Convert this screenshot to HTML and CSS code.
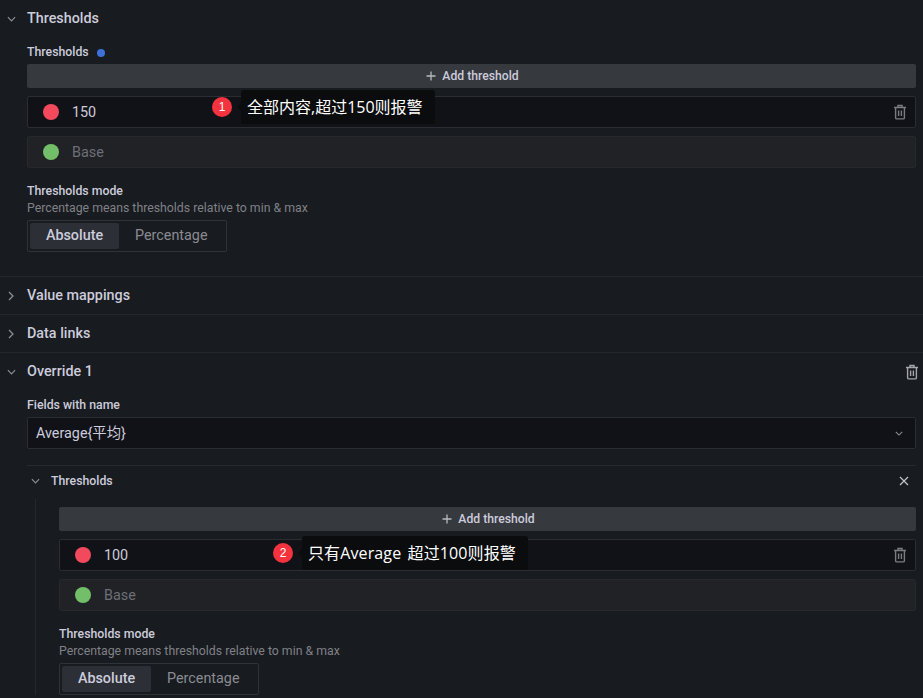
FILE: index.html
```html
<!DOCTYPE html>
<html lang="en">
<head>
<meta charset="utf-8">
<title>Thresholds</title>
<link rel="stylesheet" href="styles.css">
</head>
<body>
<svg class="defs" width="0" height="0" aria-hidden="true">
  <symbol id="trash" viewBox="0 0 14 16"><path d="M1 3.5h12M5 3.5V1.5h4v2M2.6 3.5v10.2c0 .7.5 1.2 1.2 1.2h6.4c.7 0 1.2-.5 1.2-1.2V3.5M5.6 6.5v5.5M8.4 6.5v5.5" fill="none" stroke="currentColor" stroke-width="1.4"/></symbol>
  <symbol id="down" viewBox="0 0 10 6"><path d="M1 1l4 4 4-4" fill="none" stroke="currentColor" stroke-width="1.3"/></symbol>
  <symbol id="right" viewBox="0 0 6 10"><path d="M1 1l4 4-4 4" fill="none" stroke="currentColor" stroke-width="1.3"/></symbol>
  <symbol id="plus" viewBox="0 0 10 10"><path d="M5 .5v9M.5 5h9" fill="none" stroke="currentColor" stroke-width="1.3"/></symbol>
</svg>

<main class="panel">
  <section class="section section-open-first">
    <header class="head">
      <svg class="chev-down"><use href="#down"/></svg>
      <h2 class="title">Thresholds</h2>
    </header>
    <div class="body">
      <div class="label label-dot">Thresholds <span class="dot"></span></div>
      <div class="thresholds">
        <button class="add"><svg class="plus"><use href="#plus"/></svg>Add threshold</button>
        <div class="row row-input">
          <span class="swatch red"></span><span class="val">150</span>
          <svg class="trash"><use href="#trash"/></svg>
          <span class="note note-one"><span class="badge">1</span><span class="tip">全部内容,超过150则报警</span></span>
        </div>
        <div class="row row-base"><span class="swatch green"></span><span class="val muted">Base</span></div>
      </div>
      <div class="label mode-label">Thresholds mode</div>
      <div class="desc">Percentage means thresholds relative to min &amp; max</div>
      <div class="radio"><span class="opt active">Absolute</span><span class="opt">Percentage</span></div>
    </div>
  </section>

  <section class="section closed">
    <header class="head"><svg class="chev-right"><use href="#right"/></svg><h2 class="title">Value mappings</h2></header>
  </section>
  <section class="section closed">
    <header class="head"><svg class="chev-right"><use href="#right"/></svg><h2 class="title">Data links</h2></header>
  </section>

  <section class="section">
    <header class="head">
      <svg class="chev-down"><use href="#down"/></svg>
      <h2 class="title">Override 1</h2>
      <svg class="trash trash-light"><use href="#trash"/></svg>
    </header>
    <div class="body">
      <div class="label label-fields">Fields with name</div>
      <div class="select"><span>Average{平均}</span><svg class="select-chev"><use href="#down"/></svg></div>
      <div class="sub">
        <header class="sub-head">
          <svg class="chev-down sub-chev"><use href="#down"/></svg>
          <span class="sub-title">Thresholds</span>
          <svg class="close" viewBox="0 0 10 10"><path d="M1 1l8 8M9 1l-8 8" fill="none" stroke="currentColor" stroke-width="1.2"/></svg>
        </header>
        <div class="sub-body">
          <div class="thresholds">
            <button class="add"><svg class="plus"><use href="#plus"/></svg>Add threshold</button>
            <div class="row row-input">
              <span class="swatch red"></span><span class="val">100</span>
              <svg class="trash"><use href="#trash"/></svg>
              <span class="note note-two"><span class="badge">2</span><span class="tip">只有Average 超过100则报警</span></span>
            </div>
            <div class="row row-base"><span class="swatch green"></span><span class="val muted">Base</span></div>
          </div>
          <div class="label mode-label">Thresholds mode</div>
          <div class="desc">Percentage means thresholds relative to min &amp; max</div>
          <div class="radio"><span class="opt active">Absolute</span><span class="opt">Percentage</span></div>
        </div>
      </div>
    </div>
  </section>
</main>
</body>
</html>
```
FILE: styles.css
```css
html, body {
  margin: 0;
  height: 698px;
  overflow: hidden;
  background: #181b1f;
}
body {
  font-family: Roboto, "Noto Sans CJK SC", sans-serif;
  color: #ccccdc;
  font-size: 14.35px;
}
.defs { position: absolute; }
.panel { display: flex; flex-direction: column; }
.section { border-bottom: 1px solid #24272b; }
.section-open-first { height: 276px; }
.closed { height: 37px; }
.section:last-child { border-bottom: 0; }
.head {
  display: flex;
  align-items: center;
  height: 37px;
  padding: 0 4px 0 7px;
}
.title {
  margin: 0;
  font-size: 14.35px;
  font-weight: 500;
  line-height: 37px;
  flex: 1;
  color: #ccccdc;
}
.chev-down { width: 9px; height: 6px; margin-right: 11px; color: #8e8e96; }
.chev-right { width: 6px; height: 10px; margin: 0 13px 0 1px; color: #8e8e96; }
.body { padding: 0 7px 0 27px; }
.label {
  font-size: 12.3px;
  font-weight: 500;
  line-height: 15px;
  color: #ccccdc;
}
.label-dot { display: flex; align-items: center; gap: 8px; padding-top: 8px; margin-bottom: 4px; }
.label-fields { padding-top: 8px; }
.dot { width: 8px; height: 8px; border-radius: 50%; background: #3d71d9; }
.thresholds { display: flex; flex-direction: column; }
.add {
  display: flex;
  align-items: center;
  justify-content: center;
  gap: 6px;
  height: 24px;
  border: 0;
  padding: 0 0 0 2px;
  border-radius: 2px;
  background: #36393e;
  color: #ccccdc;
  font: 500 12.2px Roboto, sans-serif;
}
.plus { width: 10px; height: 10px; color: #b9b9c2; }
.row {
  position: relative;
  display: flex;
  align-items: center;
  box-sizing: border-box;
  border-radius: 2px;
  height: 32px;
  padding: 0 8px 0 15px;
}
.row-input { margin-top: 8px; background: #111217; border: 1px solid #2a2d31; }
.row-base { margin-top: 8px; background: #202226; border: 1px solid #25282c; }
.swatch { width: 16px; height: 16px; border-radius: 50%; margin-right: 13px; }
.red { background: #f2495c; }
.green { background: #73bf69; }
.val { font-size: 14.35px; line-height: 20px; padding-top: 2px; color: #ccccdc; }
.muted { color: #6e6f77; }
.trash { width: 14px; height: 16px; margin-left: auto; color: #7b7c83; }
.trash-light { color: #a4a5ad; flex: none; }
.mode-label { margin-top: 16px; }
.desc { font-size: 12.3px; line-height: 16px; color: #808188; margin-top: 1px; }
.radio {
  display: inline-flex;
  box-sizing: border-box;
  width: 200px;
  height: 32px;
  padding: 2px;
  margin-top: 4px;
  border: 1px solid #2f3237;
  border-radius: 2px;
}
.opt {
  display: flex;
  align-items: center;
  justify-content: center;
  padding: 0 16px 2px;
  font-size: 14.35px;
  color: #8a8b93;
}
.active {
  width: 89px;
  box-sizing: border-box;
  background: #2c2f35;
  color: #ccccdc;
  font-weight: 500;
  border-radius: 2px;
}
.select {
  display: flex;
  align-items: center;
  justify-content: space-between;
  box-sizing: border-box;
  height: 32px;
  margin-top: 4px;
  padding: 0 12px 3px 8px;
  background: #111217;
  border: 1px solid #2a2d31;
  border-radius: 2px;
  font-size: 14.35px;
}
.select-chev { width: 8px; height: 5px; margin-top: 3px; color: #8e8e96; }
.sub { margin-top: 16px; border-top: 1px solid #26292d; }
.sub-head { display: flex; align-items: center; height: 29px; padding-bottom: 4px; }
.sub-chev { margin: 0 11px 0 4px; }
.sub-title { flex: 1; font-size: 12.3px; font-weight: 500; color: #ccccdc; }
.close { width: 10px; height: 10px; margin-right: 7px; color: #c4c4ce; }
.sub-body { margin-left: 8px; border-left: 1px solid #24272b; padding: 8px 0 0 23px; }
.note { position: absolute; display: flex; align-items: center; top: -7px; height: 34px; }
.note-one { left: 184px; }
.note-two { left: 213px; top: -4px; }
.note-two .tip { word-spacing: 2px; letter-spacing: 0.12px; }
.badge {
  width: 20px;
  height: 20px;
  border-radius: 50%;
  background: #f5333f;
  color: #fff;
  font: 12px/20px "Liberation Sans", sans-serif;
  text-align: center;
}
.tip {
  position: relative;
  margin-left: 9px;
  padding: 0 12px 0 6px;
  height: 34px;
  background: #0b0c0e;
  border-radius: 3px;
  color: #fff;
  font: 16px/34px "Open Sans", "Noto Sans CJK SC", sans-serif;
  white-space: nowrap;
}
.tip::before {
  content: "";
  position: absolute;
  left: -4px;
  top: 13px;
  border-style: solid;
  border-width: 4px 4px 4px 0;
  border-color: transparent #0b0c0e transparent transparent;
}
```
